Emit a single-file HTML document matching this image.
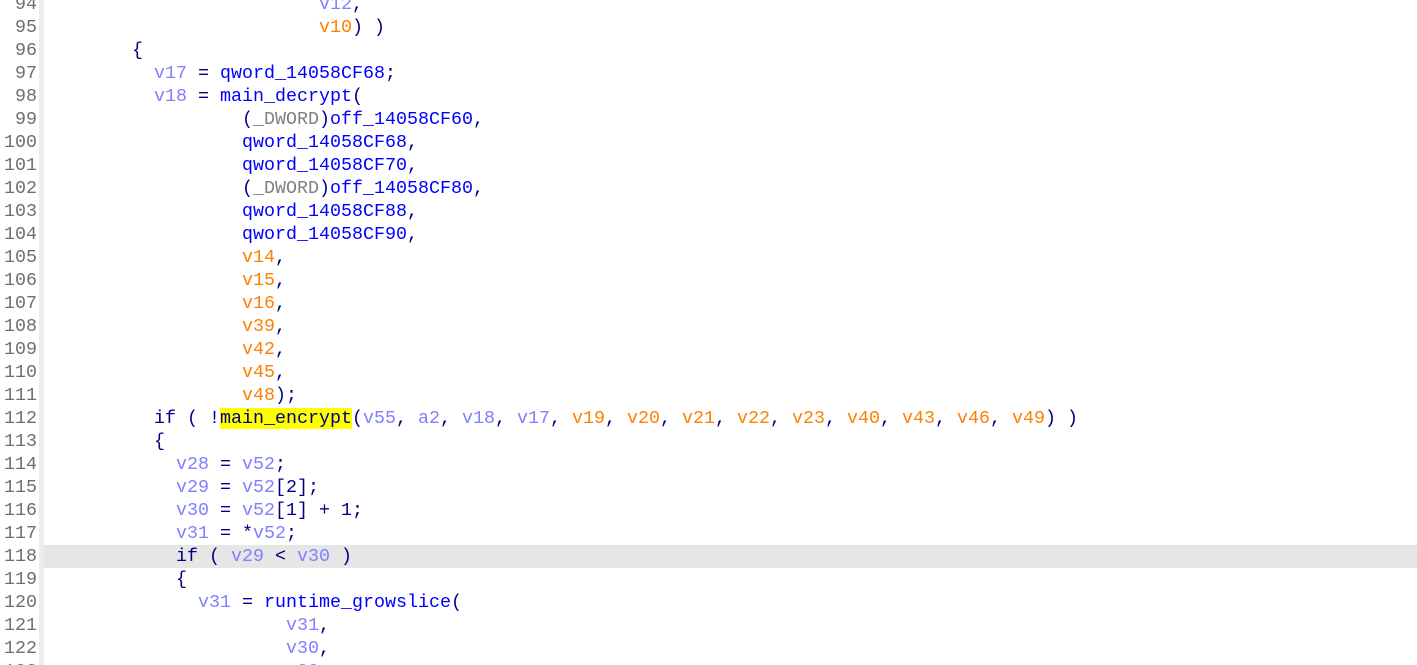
<!DOCTYPE html>
<html><head><meta charset="utf-8"><style>
html,body{margin:0;padding:0;background:#fff;width:1417px;height:665px;overflow:hidden}
body{position:relative;font-family:"Liberation Mono",monospace;font-size:18.33px}
.gut{position:absolute;left:0;top:0;width:39px;height:665px;background:#fff}
.sep{position:absolute;left:39px;top:0;width:5px;height:665px;background:#ececec}
.ln{position:absolute;left:0;width:37px;text-align:right;color:#6e6e6e;height:23px;line-height:23px}
.tx{position:absolute;left:44px;right:0;white-space:pre;color:#000080;height:23px;line-height:23px}
.hl{background:#e6e6e6}
.v{color:#8080ff}.o{color:#ff8000}.g{color:#0000ff}.d{color:#808080}.y{background:#ffff00}
</style></head><body>
<div class="gut"></div><div class="sep"></div>
<div id="c"></div>
<script>
var L=[
[94,"                         <span class=v>v12</span>,"],
[95,"                         <span class=o>v10</span>) )"],
[96,"        {"],
[97,"          <span class=v>v17</span> = <span class=g>qword_14058CF68</span>;"],
[98,"          <span class=v>v18</span> = <span class=g>main_decrypt</span>("],
[99,"                  (<span class=d>_DWORD</span>)<span class=g>off_14058CF60</span>,"],
[100,"                  <span class=g>qword_14058CF68</span>,"],
[101,"                  <span class=g>qword_14058CF70</span>,"],
[102,"                  (<span class=d>_DWORD</span>)<span class=g>off_14058CF80</span>,"],
[103,"                  <span class=g>qword_14058CF88</span>,"],
[104,"                  <span class=g>qword_14058CF90</span>,"],
[105,"                  <span class=o>v14</span>,"],
[106,"                  <span class=o>v15</span>,"],
[107,"                  <span class=o>v16</span>,"],
[108,"                  <span class=o>v39</span>,"],
[109,"                  <span class=o>v42</span>,"],
[110,"                  <span class=o>v45</span>,"],
[111,"                  <span class=o>v48</span>);"],
[112,"          if ( !<span class=y>main_encrypt</span>(<span class=v>v55</span>, <span class=v>a2</span>, <span class=v>v18</span>, <span class=v>v17</span>, <span class=o>v19</span>, <span class=o>v20</span>, <span class=o>v21</span>, <span class=o>v22</span>, <span class=o>v23</span>, <span class=o>v40</span>, <span class=o>v43</span>, <span class=o>v46</span>, <span class=o>v49</span>) )"],
[113,"          {"],
[114,"            <span class=v>v28</span> = <span class=v>v52</span>;"],
[115,"            <span class=v>v29</span> = <span class=v>v52</span>[2];"],
[116,"            <span class=v>v30</span> = <span class=v>v52</span>[1] + 1;"],
[117,"            <span class=v>v31</span> = *<span class=v>v52</span>;"],
[118,"            if ( <span class=v>v29</span> &lt; <span class=v>v30</span> )"],
[119,"            {"],
[120,"              <span class=v>v31</span> = <span class=g>runtime_growslice</span>("],
[121,"                      <span class=v>v31</span>,"],
[122,"                      <span class=v>v30</span>,"],
[123,"                      <span class=v>v29</span>,"]];
var h="";
L.forEach(function(r){var t=27+(r[0]-95)*23-11.5;
h+='<div class="ln" style="top:'+t+'px">'+r[0]+'</div><div class="tx'+(r[0]==118?' hl':'')+'" style="top:'+t+'px">'+r[1]+'</div>';});
document.getElementById("c").innerHTML=h;
</script>
</body></html>
